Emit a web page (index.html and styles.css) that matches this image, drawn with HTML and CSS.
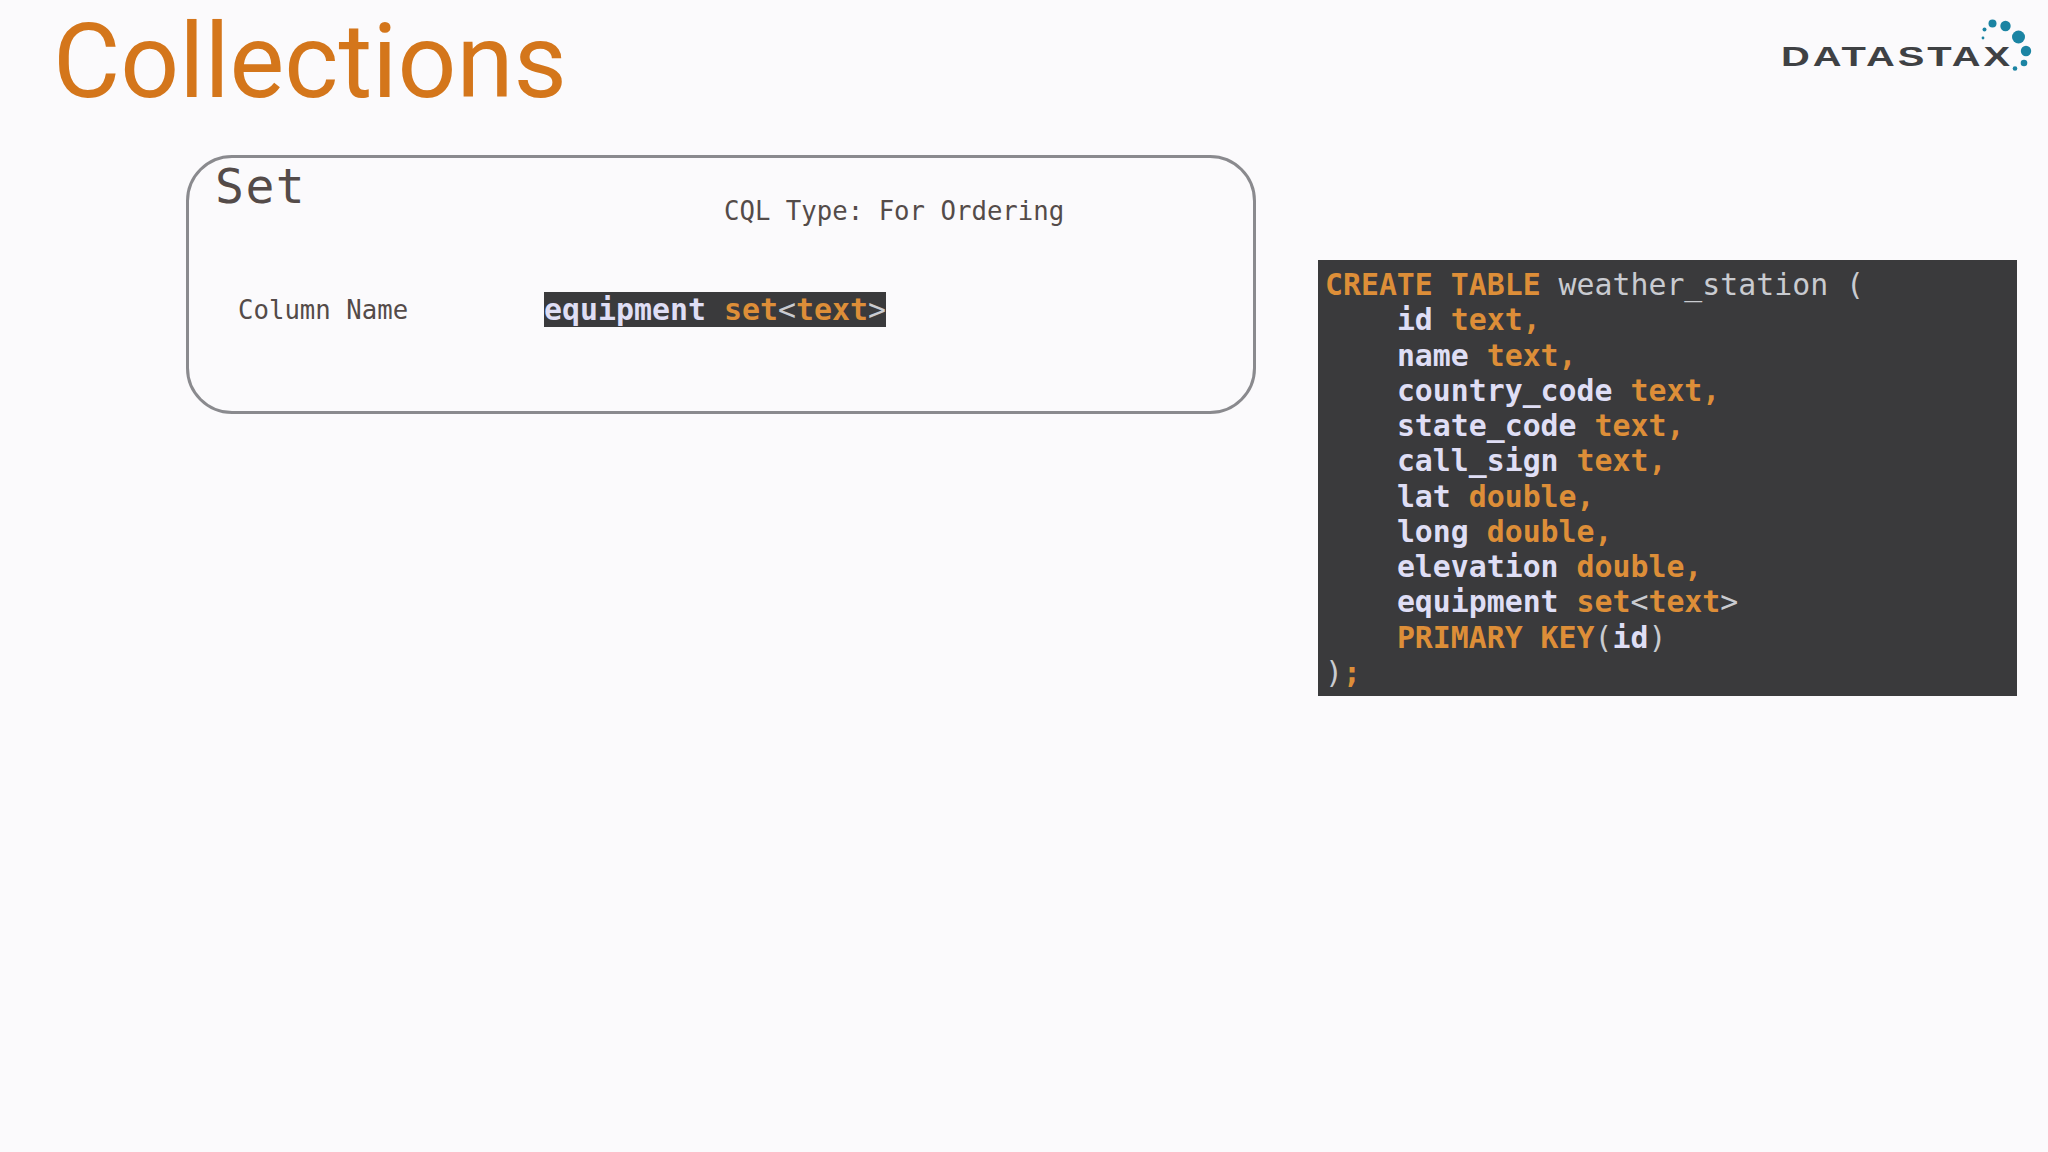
FILE: index.html
```html
<!DOCTYPE html>
<html lang="en">
<head>
<meta charset="utf-8">
<title>Collections</title>
<link rel="stylesheet" href="styles.css">
</head>
<body>
<div class="page">
  <header class="header">
    <h1 class="title">Collections</h1>
    <svg class="logo" viewBox="0 0 308 90" width="308" height="90" aria-label="DataStax">
      <text class="logo-text" x="41" y="66" textLength="232" lengthAdjust="spacingAndGlyphs">DATASTAX</text>
      <circle class="dot" cx="252.5" cy="23.5" r="4"/>
      <circle class="dot" cx="265.5" cy="26" r="5.2"/>
      <circle class="dot" cx="278.5" cy="37" r="6.5"/>
      <circle class="dot" cx="286" cy="51" r="5.2"/>
      <circle class="dot" cx="284" cy="63" r="3.3"/>
      <circle class="dot" cx="275" cy="68.5" r="2.3"/>
      <circle class="dot" cx="244.5" cy="29.5" r="2"/>
      <circle class="dot" cx="243" cy="38" r="1.4"/>
    </svg>
  </header>
  <main class="main">
    <section class="card">
      <div class="card-head">
        <h2 class="card-title">Set</h2>
        <p class="card-type">CQL Type: For Ordering</p>
      </div>
      <div class="card-row">
        <span class="row-label">Column Name</span>
        <code class="snippet"><span class="name">equipment</span> <span class="kw">set</span><span class="plain">&lt;</span><span class="kw">text</span><span class="plain">&gt;</span></code>
      </div>
    </section>
    <pre class="code"><span class="kw">CREATE TABLE</span> <span class="plain">weather_station (</span>
    <span class="name">id</span> <span class="kw">text,</span>
    <span class="name">name</span> <span class="kw">text,</span>
    <span class="name">country_code</span> <span class="kw">text,</span>
    <span class="name">state_code</span> <span class="kw">text,</span>
    <span class="name">call_sign</span> <span class="kw">text,</span>
    <span class="name">lat</span> <span class="kw">double,</span>
    <span class="name">long</span> <span class="kw">double,</span>
    <span class="name">elevation</span> <span class="kw">double,</span>
    <span class="name">equipment</span> <span class="kw">set</span><span class="plain">&lt;</span><span class="kw">text</span><span class="plain">&gt;</span>
    <span class="kw">PRIMARY KEY</span><span class="plain">(</span><span class="name">id</span><span class="plain">)</span>
<span class="plain">)</span><span class="kw">;</span></pre>
  </main>
</div>
</body>
</html>
```
FILE: styles.css
```css
* { box-sizing: border-box; }
html, body { margin: 0; padding: 0; }
body { background: #fbfafc; }
.page { width: 2048px; height: 1152px; overflow: hidden; background: #fbfafc; }
.header { display: flex; justify-content: space-between; align-items: flex-start; height: 155px; padding-left: 53px; }
.title { margin: 0; font: 400 103.4px/124px Roboto, sans-serif; color: #d4761b; }
.logo { display: block; flex: none; }
.logo-text { font: 700 27px "Liberation Sans", sans-serif; letter-spacing: 2px; fill: #3f4144; }
.dot { fill: #1b84a3; }
.main { display: flex; align-items: flex-start; padding-left: 186px; }
.card { flex: none; width: 1070px; height: 259px; border: 3px solid #8a8a8e; border-radius: 46px; color: #544b49; font-family: "DejaVu Sans Mono", monospace; }
.card-head { display: flex; align-items: flex-start; height: 134px; padding-left: 26px; }
.card-title { margin: 0; width: 87px; font-size: 48px; font-weight: 400; line-height: 56px; letter-spacing: 1.5px; }
.card-type { margin: 37px 0 0 422px; font-size: 25.7px; line-height: 32px; }
.card-row { display: flex; align-items: flex-start; padding-left: 49px; }
.row-label { width: 306px; font-size: 25.7px; line-height: 35px; padding-top: 1px; }
.snippet { display: block; background: #3a3a3c; font: 700 29.9px/35px "DejaVu Sans Mono", monospace; white-space: pre; }
.code { flex: none; margin: 105px 0 0 62px; width: 699px; height: 436px; padding: 7px 7px; background: #3a3a3c; font: 700 29.85px/35.25px "DejaVu Sans Mono", monospace; }
.kw { color: #dd8e38; font-weight: 700; }
.name { color: #dfdef5; font-weight: 700; }
.plain { color: #c9cbd0; font-weight: 400; }
```
